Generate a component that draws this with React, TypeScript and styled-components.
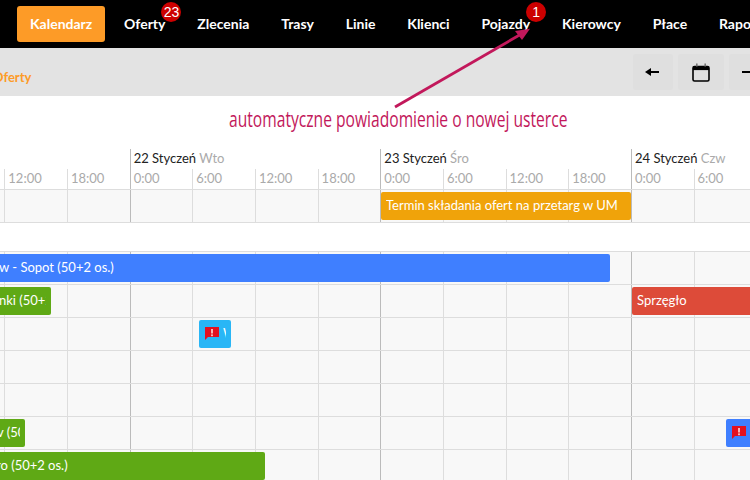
import React from 'react';
import styled, { createGlobalStyle } from 'styled-components';

const HOUR = 62.67;
const DAY = HOUR * 4;
const START = -121;

const GlobalStyle = createGlobalStyle`
  html, body {
    margin: 0;
    padding: 0;
    background: #fff;
  }
  body {
    font-family: Lato, "Liberation Sans", sans-serif;
    font-size: 13px;
  }
`;

const Page = styled.div`
  position: relative;
  width: 750px;
  height: 480px;
  overflow: hidden;
`;

const Nav = styled.nav`
  height: 48px;
  background: #000;
  display: flex;
  align-items: center;
  gap: 5.85px;
  padding-left: 17px;
  white-space: nowrap;
`;

const NavItem = styled.a<{ $active?: boolean }>`
  position: relative;
  flex: none;
  height: 36px;
  line-height: 36px;
  padding: 0 13px;
  border-radius: 3px;
  color: #fff;
  font-weight: 700;
  font-size: 14px;
  background: ${({ $active }) => ($active ? '#fd9b27' : 'transparent')};
`;

const Badge = styled.span`
  position: absolute;
  top: -4px;
  right: -3px;
  width: 20px;
  height: 20px;
  border-radius: 50%;
  background: #cc0000;
  color: #fff;
  font: 400 14px/20px "Liberation Sans", sans-serif;
  text-align: center;
`;

const Toolbar = styled.div`
  height: 48px;
  background: #e3e3e3;
  display: flex;
  align-items: center;
  justify-content: space-between;
  white-space: nowrap;
`;

const Crumb = styled.span`
  margin: 10px 0 0 -7px;
  color: #fd9b27;
  font-weight: 700;
  font-size: 13px;
`;

const ToolButtons = styled.div`
  display: flex;
  gap: 5px;
  margin-right: -19px;
`;

const ToolButton = styled.button<{ $wide?: boolean }>`
  width: ${({ $wide }) => ($wide ? 46 : 40)}px;
  height: 36px;
  border: 0;
  border-radius: 3px;
  background: #dfdfdf;
  padding: 0;
  display: flex;
  align-items: center;
  justify-content: center;
  color: #000;
`;

const Timeline = styled.div`
  padding-top: 53px;
  margin-left: ${START}px;
  width: 1100px;
`;

const DayHeader = styled.div`
  display: flex;
  height: 20px;
`;

const DayLabel = styled.div`
  flex: none;
  box-sizing: border-box;
  width: ${DAY}px;
  border-left: 1px solid #bbb;
  padding-left: 3px;
  line-height: 18px;
  color: #222;
  white-space: nowrap;
`;

const DayName = styled.span`
  color: #aaa;
`;

const HourRow = styled.div`
  display: flex;
  height: 20px;
  border-bottom: 1px solid #ddd;
`;

const HourCell = styled.div<{ $first?: boolean }>`
  flex: none;
  box-sizing: border-box;
  width: ${HOUR}px;
  border-left: 1px solid ${({ $first }) => ($first ? '#bbb' : '#ddd')};
  padding-left: 3px;
  line-height: 19px;
  color: #aaa;
`;

const Row = styled.div`
  position: relative;
  display: flex;
  height: 32px;
  background: #f8f8f8;
  border-bottom: 1px solid #ddd;
`;

const Cell = styled.div<{ $first?: boolean }>`
  flex: none;
  box-sizing: border-box;
  width: ${HOUR}px;
  border-left: 1px solid ${({ $first }) => ($first ? '#bbb' : '#ddd')};
`;

const BlankRow = styled.div`
  height: 28px;
  background: #fff;
  border-bottom: 1px solid #ddd;
`;

const Bar = styled.div<{ $left: number; $width: number; $color: string }>`
  position: absolute;
  top: 2px;
  left: ${({ $left }) => $left - START}px;
  width: ${({ $width }) => $width}px;
  height: 28px;
  box-sizing: border-box;
  padding: 0 5px 2px;
  border-radius: 2px;
  background: ${({ $color }) => $color};
  color: #fff;
  display: flex;
  align-items: center;
  gap: 4px;
`;

const BarLabel = styled.span`
  flex: 1;
  min-width: 0;
  overflow: hidden;
  white-space: nowrap;
`;

const AlertSvg = styled.svg`
  flex: none;
  margin: 1px 0 0 1px;
`;

const Annotation = styled.div`
  position: absolute;
  left: 229px;
  top: 105px;
  color: #c2185b;
  font-family: "Open Sans", sans-serif;
  font-size: 21px;
  line-height: 28px;
  white-space: nowrap;
  transform-origin: left center;
  transform: scaleX(0.744);
`;

const ArrowOverlay = styled.svg`
  position: absolute;
  left: 380px;
  top: 20px;
`;

const AlertIcon = () => (
  <AlertSvg width="14" height="13" viewBox="0 0 14 13">
    <path d="M0 0h14v10H3l-3 3z" fill="#e4101f" />
    <rect x="6" y="2" width="2" height="4.5" fill="#f8b5b5" />
    <rect x="6" y="7.4" width="2" height="1.8" fill="#f8b5b5" />
  </AlertSvg>
);

const ArrowLeftIcon = () => (
  <svg width="16" height="12" viewBox="0 0 16 12">
    <path d="M0 6l6-4v3h8v2H6v3z" fill="#000" />
  </svg>
);

const ArrowRightIcon = () => (
  <svg width="16" height="12" viewBox="0 0 16 12">
    <path d="M15 6L9 2v3H1v2h8v3z" fill="#000" />
  </svg>
);

const CalendarIcon = () => (
  <svg width="18" height="19" viewBox="0 0 18 19">
    <rect x="1" y="3.5" width="16" height="14.5" rx="1.5" fill="none" stroke="#000" strokeWidth="1.6" />
    <rect x="1" y="3.5" width="16" height="3.6" fill="#000" />
    <rect x="4" y="0.5" width="1.6" height="3" fill="#777" />
    <rect x="12.4" y="0.5" width="1.6" height="3" fill="#777" />
  </svg>
);

const nav = ['Oferty', 'Zlecenia', 'Trasy', 'Linie', 'Klienci', 'Pojazdy', 'Kierowcy', 'Płace', 'Raporty'];
const badges: Record<string, number> = { Oferty: 23, Pojazdy: 1 };
const days = [
  { label: '', name: '' },
  { label: '22 Styczeń', name: 'Wto' },
  { label: '23 Styczeń', name: 'Śro' },
  { label: '24 Styczeń', name: 'Czw' },
];
const hours = ['0:00', '6:00', '12:00', '18:00'];
const slots = Array.from({ length: 16 }, (_, i) => i);

const Cells = () => (
  <>
    {slots.map((i) => (
      <Cell key={i} $first={i % 4 === 0} />
    ))}
  </>
);

const App = () => (
  <Page>
    <GlobalStyle />
    <Nav>
      <NavItem $active>Kalendarz</NavItem>
      {nav.map((item) => (
        <NavItem key={item}>
          {item}
          {badges[item] && <Badge>{badges[item]}</Badge>}
        </NavItem>
      ))}
    </Nav>
    <Toolbar>
      <Crumb>Oferty</Crumb>
      <ToolButtons>
        <ToolButton><ArrowLeftIcon /></ToolButton>
        <ToolButton $wide><CalendarIcon /></ToolButton>
        <ToolButton><ArrowRightIcon /></ToolButton>
      </ToolButtons>
    </Toolbar>
    <Timeline>
      <DayHeader>
        {days.map((d) => (
          <DayLabel key={d.label}>
            {d.label} <DayName>{d.name}</DayName>
          </DayLabel>
        ))}
      </DayHeader>
      <HourRow>
        {slots.map((i) => (
          <HourCell key={i} $first={i % 4 === 0}>{hours[i % 4]}</HourCell>
        ))}
      </HourRow>
      <Row>
        <Cells />
        <Bar $left={381} $width={250} $color="#f0a30a">
          <BarLabel>Termin składania ofert na przetarg w UM</BarLabel>
        </Bar>
      </Row>
      <BlankRow />
      <Row>
        <Cells />
        <Bar $left={-6} $width={616} $color="#3f7fff">
          <BarLabel>w - Sopot (50+2 os.)</BarLabel>
        </Bar>
      </Row>
      <Row>
        <Cells />
        <Bar $left={-6} $width={57} $color="#5fa915">
          <BarLabel>nki (50+2 os.)</BarLabel>
        </Bar>
        <Bar $left={632} $width={140} $color="#dd4b39">
          <BarLabel>Sprzęgło</BarLabel>
        </Bar>
      </Row>
      <Row>
        <Cells />
        <Bar $left={199} $width={32} $color="#29b6f6">
          <AlertIcon />
          <BarLabel>Wymiana</BarLabel>
        </Bar>
      </Row>
      <Row>
        <Cells />
      </Row>
      <Row>
        <Cells />
      </Row>
      <Row>
        <Cells />
        <Bar $left={-8} $width={33} $color="#5fa915">
          <BarLabel>v (50+2 os.)</BarLabel>
        </Bar>
        <Bar $left={726} $width={60} $color="#3f7fff">
          <AlertIcon />
          <BarLabel>Wymiana</BarLabel>
        </Bar>
      </Row>
      <Row>
        <Cells />
        <Bar $left={-9} $width={274} $color="#5fa915">
          <BarLabel>ro (50+2 os.)</BarLabel>
        </Bar>
      </Row>
    </Timeline>
    <Annotation>automatyczne powiadomienie o nowej usterce</Annotation>
    <ArrowOverlay width="160" height="95" viewBox="0 0 160 95">
      <path d="M15 87L143 13" stroke="#c2185b" strokeWidth="2.8" fill="none" />
      <path d="M150 8.7L135 11L142 20z" fill="#c2185b" />
    </ArrowOverlay>
  </Page>
);

export default App;
